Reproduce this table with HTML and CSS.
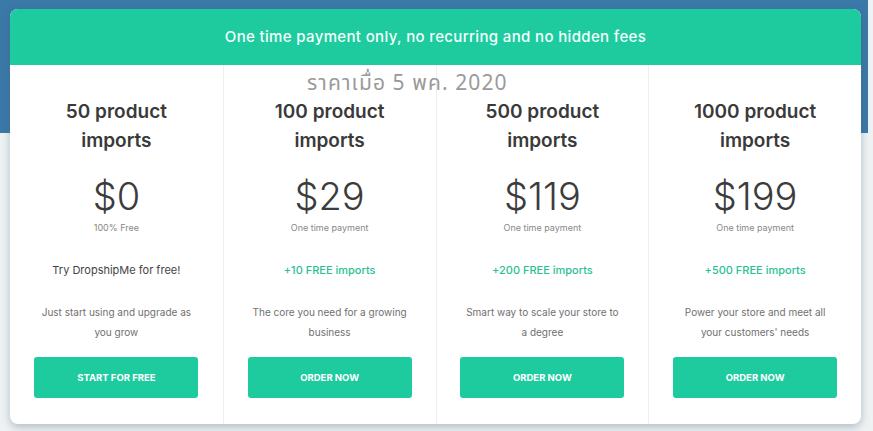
FILE: index.html
```html
<!DOCTYPE html>
<html lang="en">
<head>
    <meta charset="UTF-8">
    <meta name="viewport" content="width=device-width, initial-scale=1.0">
    <title>DropshipMe Pricing</title>
    <link rel="stylesheet" href="styles.css">
</head>
<body>
    <div class="pricing-card">
        <!-- Header Banner -->
        <div class="pricing-header">One time payment only, no recurring and no hidden fees</div>

        <!-- Date Note -->
        <div class="date-note">ราคาเมื่อ 5 พค. 2020</div>

        <!-- Plans -->
        <div class="plans">
            <div class="plan">
                <h2 class="plan-title">50 product imports</h2>
                <div class="plan-price">$0</div>
                <div class="plan-sub">100% Free</div>
                <div class="plan-tag">Try DropshipMe for free!</div>
                <p class="plan-desc">Just start using and upgrade as you grow</p>
                <button class="plan-button">START FOR FREE</button>
            </div>
            <div class="plan">
                <h2 class="plan-title">100 product imports</h2>
                <div class="plan-price">$29</div>
                <div class="plan-sub">One time payment</div>
                <div class="plan-tag bonus">+10 FREE imports</div>
                <p class="plan-desc">The core you need for a growing business</p>
                <button class="plan-button">ORDER NOW</button>
            </div>
            <div class="plan">
                <h2 class="plan-title">500 product imports</h2>
                <div class="plan-price">$119</div>
                <div class="plan-sub">One time payment</div>
                <div class="plan-tag bonus">+200 FREE imports</div>
                <p class="plan-desc">Smart way to scale your store to a degree</p>
                <button class="plan-button">ORDER NOW</button>
            </div>
            <div class="plan">
                <h2 class="plan-title">1000 product imports</h2>
                <div class="plan-price">$199</div>
                <div class="plan-sub">One time payment</div>
                <div class="plan-tag bonus">+500 FREE imports</div>
                <p class="plan-desc">Power your store and meet all your customers' needs</p>
                <button class="plan-button">ORDER NOW</button>
            </div>
        </div>
    </div>
</body>
</html>
```

FILE: styles.css
```css
/* Page */
body {
    margin: 0;
    padding: 9px 12px 0 10px;
    font-family: 'Inter', 'Noto Sans', sans-serif;
    background-color: #eef2f3;
    background-image: linear-gradient(#3b79a9, #3b79a9);
    background-size: calc(100% - 5px) 133px;
    background-repeat: no-repeat;
    min-height: 100vh;
    box-sizing: border-box;
}

.pricing-card {
    position: relative;
    background: #fff;
    border-radius: 8px;
    overflow: hidden;
    box-shadow: 0 3px 8px rgba(60, 90, 110, 0.35);
}

/* Header */
.pricing-header {
    background: #1ecb9f;
    color: #f2fffb;
    text-align: center;
    font-size: 15px;
    font-weight: 500;
    height: 56px;
    line-height: 56px;
    letter-spacing: 0.35px;
}

.date-note {
    position: absolute;
    top: 59px;
    left: 297px;
    font-family: 'Noto Sans Thai', 'Noto Sans', 'DejaVu Sans', sans-serif;
    font-size: 21px;
    color: #9a9a9a;
    letter-spacing: 1.1px;
}

/* Plans */
.plans {
    display: grid;
    grid-template-columns: repeat(4, 1fr);
}

.plan {
    display: flex;
    flex-direction: column;
    align-items: center;
    text-align: center;
    padding: 32px 23px 26px;
    border-left: 1px solid #eeeeee;
}

.plan:first-child {
    border-left: none;
}

.plan-title {
    margin: 0;
    width: 130px;
    font-size: 19px;
    font-weight: 600;
    line-height: 29px;
    color: #3a3a3a;
}

.plan-price {
    margin-top: 19px;
    font-size: 38px;
    font-weight: 300;
    line-height: 44px;
    color: #3c3c3c;
}

.plan-sub {
    margin-top: 3px;
    font-size: 9px;
    line-height: 14px;
    color: #888;
}

.plan-tag {
    margin-top: 27px;
    font-size: 11px;
    line-height: 16px;
    color: #444;
}

.plan-tag.bonus {
    color: #2bbf95;
    font-weight: 500;
}

.plan-desc {
    margin: 24px 0 0;
    font-size: 10px;
    line-height: 20px;
    color: #707070;
    padding: 0 4px;
}

.plan-button {
    margin-top: 15px;
    width: 164px;
    height: 41px;
    border: none;
    border-radius: 3px;
    background: #1ecb9f;
    color: #fff;
    font-family: inherit;
    font-size: 9.5px;
    font-weight: 700;
    cursor: pointer;
}
```
